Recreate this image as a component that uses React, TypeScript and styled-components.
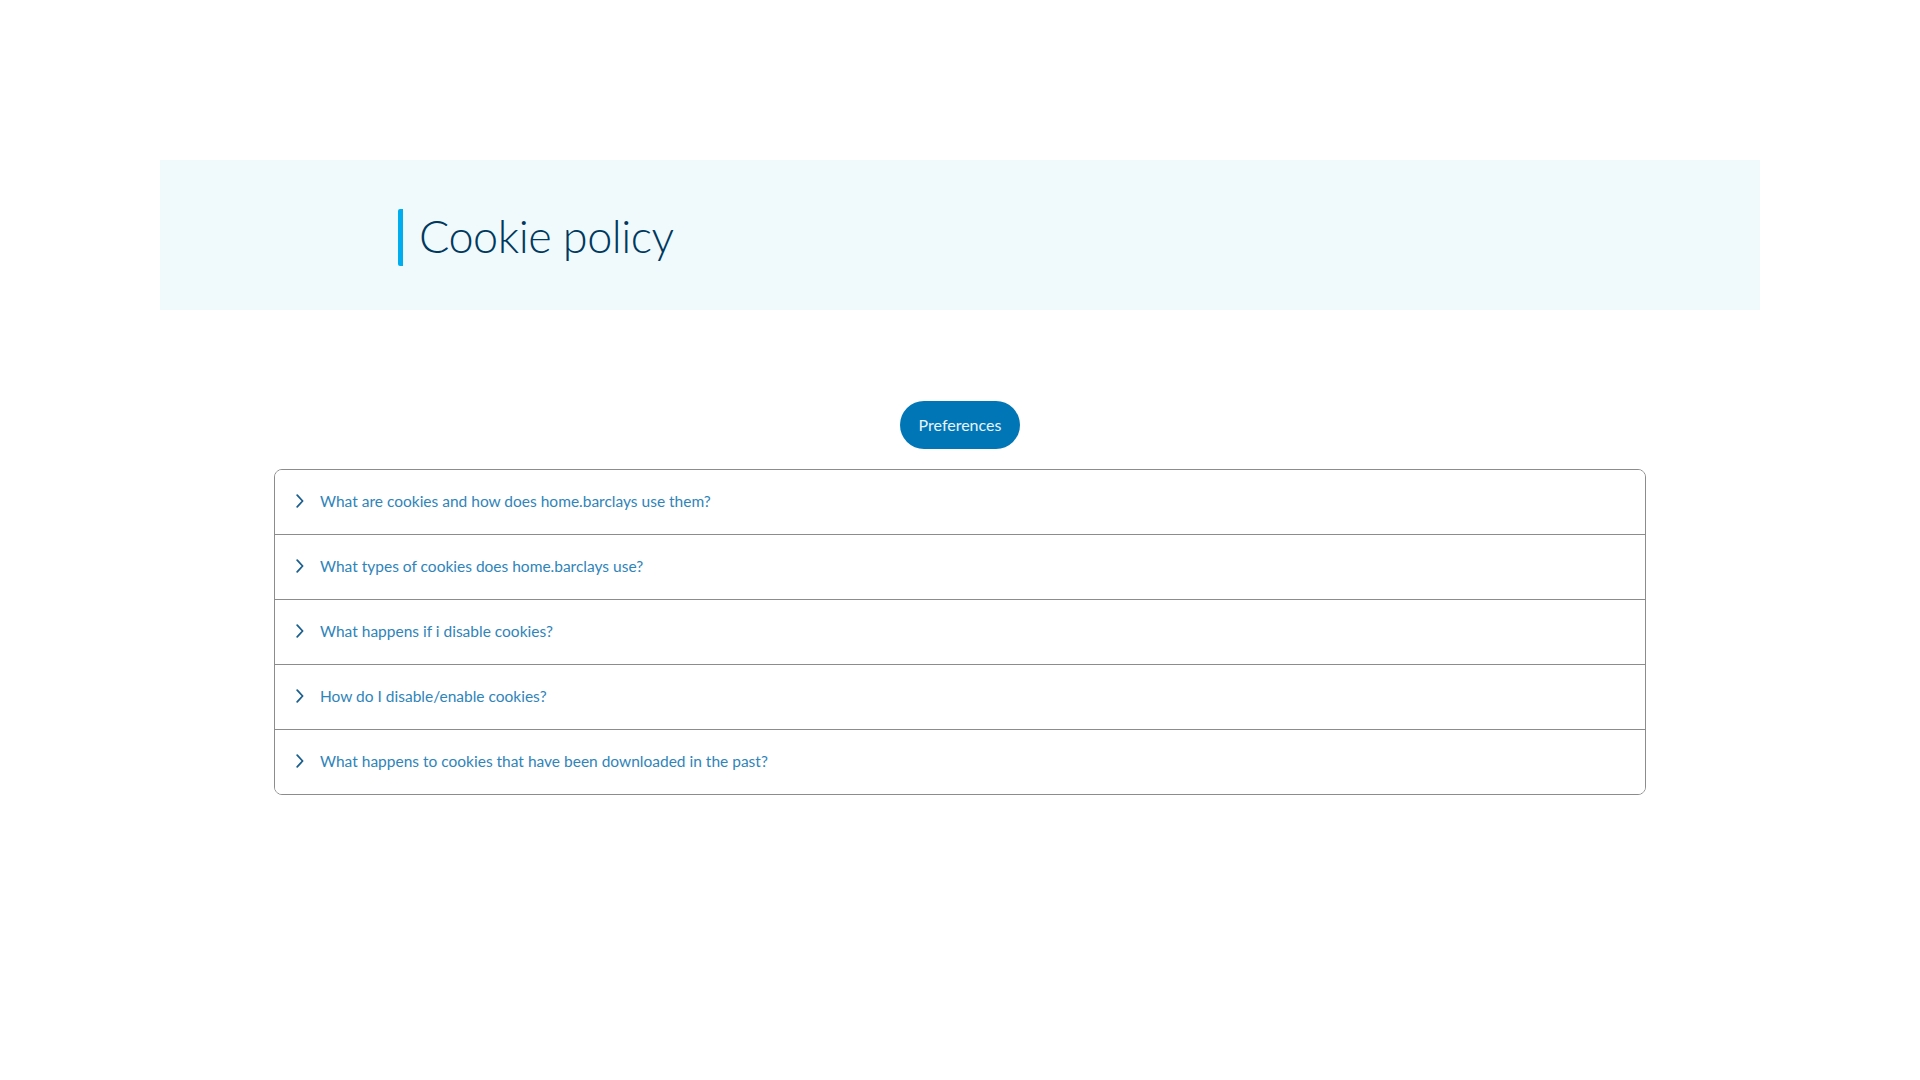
import styled, { createGlobalStyle } from 'styled-components';

const GlobalStyle = createGlobalStyle`
  body {
    margin: 0;
    background: #ffffff;
    font-family: Lato, "Open Sans", sans-serif;
  }
`;

const Page = styled.main`
  display: flex;
  flex-direction: column;
  align-items: center;
  padding-top: 160px;
`;

const Banner = styled.header`
  box-sizing: border-box;
  width: 1600px;
  height: 150px;
  background: #f0fafd;
  display: flex;
  align-items: center;
  padding: 4px 0 0 238px;
`;

const Title = styled.h1`
  margin: 0;
  padding: 0 0 3px 16px;
  border-left: 5px solid #00aeef;
  border-radius: 2px;
  font-size: 45px;
  font-weight: 300;
  line-height: 54px;
  color: #00395d;
  letter-spacing: -0.5px;
`;

const PrefButton = styled.button`
  margin-top: 91px;
  width: 120px;
  height: 48px;
  border: none;
  border-radius: 24px;
  background: #0076b6;
  color: #e8f4fb;
  font-family: inherit;
  font-size: 16px;
  padding: 0 0 2px;
  cursor: pointer;
`;

const Accordion = styled.section`
  box-sizing: border-box;
  margin-top: 20px;
  width: 1372px;
  border: 1px solid #8c8c8c;
  border-radius: 8px;
  overflow: hidden;
`;

const Row = styled.button<{ $first?: boolean }>`
  box-sizing: content-box;
  display: flex;
  align-items: center;
  gap: 16px;
  width: calc(100% - 21px);
  height: 62px;
  padding: 0 0 2px 21px;
  background: #ffffff;
  border: none;
  border-top: ${(p) => (p.$first ? 'none' : '1px solid #8c8c8c')};
  text-align: left;
  font-family: inherit;
  font-size: 15.5px;
  color: #2f84b9;
  cursor: pointer;
`;

const Chevron = () => (
  <svg width="8" height="14" viewBox="0 0 8 14" fill="none">
    <path d="M1.2 1.2 6.6 7 1.2 12.8" stroke="#1b5f8f" strokeWidth="1.8" strokeLinecap="round" strokeLinejoin="round" />
  </svg>
);

const questions = [
  'What are cookies and how does home.barclays use them?',
  'What types of cookies does home.barclays use?',
  'What happens if i disable cookies?',
  'How do I disable/enable cookies?',
  'What happens to cookies that have been downloaded in the past?',
];

export default function App() {
  return (
    <>
      <GlobalStyle />
      <Page>
        <Banner>
          <Title>Cookie policy</Title>
        </Banner>
        <PrefButton>Preferences</PrefButton>
        <Accordion>
          {questions.map((q, i) => (
            <Row key={q} $first={i === 0}>
              <Chevron />
              {q}
            </Row>
          ))}
        </Accordion>
      </Page>
    </>
  );
}
